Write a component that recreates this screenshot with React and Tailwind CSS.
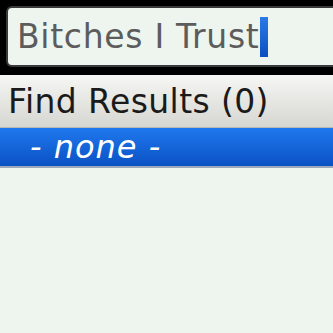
import React from 'react';

const font = { fontFamily: '"DejaVu Sans", "Open Sans", sans-serif' };

export default function App() {
  return (
    <div className="w-[333px] h-[333px] bg-[#eef5ef] overflow-hidden" style={font}>
      <div className="bg-black pt-[6px] pl-[6px] pb-[8px]">
        <div className="h-[61px] rounded-l-[6px] bg-[#eef5ef] border-2 border-r-0 border-[#3a3a3a] flex items-center pl-[9px]">
          <span className="text-[33px] leading-none text-[#5c5c5c] tracking-[0.7px]">Bitches I Trust</span>
          <span className="w-[8px] h-[40px] ml-[1px] bg-gradient-to-b from-[#2a7ae8] to-[#0b4fc0]" />
        </div>
      </div>
      <div className="h-[53px] bg-gradient-to-b from-[#f6f6f4] to-[#d6d6d2] flex items-center pl-[8px] border-b border-[#b8b8b4]">
        <span className="text-[33px] leading-none text-[#1a1a1a] tracking-[0.4px]">Find Results (0)</span>
      </div>
      <div className="h-[40px] bg-gradient-to-b from-[#1f78ee] to-[#0b52c4] flex items-center pl-[30px] border-b-2 border-[#9aa8b8]">
        <span className="text-[32px] leading-none italic text-white tracking-[1px]">- none -</span>
      </div>
    </div>
  );
}
